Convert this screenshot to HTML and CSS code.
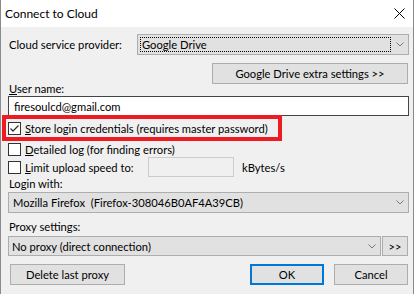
FILE: index.html
```html
<!DOCTYPE html>
<html lang="en">
<head>
    <meta charset="UTF-8">
    <title>Connect to Cloud</title>
    <link rel="stylesheet" href="styles.css">
</head>
<body>
    <div class="window">
        <div class="titlebar">
            <span class="title">Connect to Cloud</span>
            <svg class="close" width="11" height="11" viewBox="0 0 11 11">
                <path d="M0.5 0.5 L10.5 10.5 M10.5 0.5 L0.5 10.5" stroke="#000" stroke-width="1" fill="none"/>
            </svg>
        </div>

        <div class="content">
            <div class="row provider-row">
                <span class="grow">Cloud service provider:</span>
                <div class="combo provider-combo">
                    <span class="focus">Google Drive</span>
                    <span class="chevron"><svg width="8" height="5" viewBox="0 0 8 5"><path d="M0.5 0.5 L4 4 L7.5 0.5" stroke="#7a7a7a" fill="none"/></svg></span>
                </div>
            </div>

            <div class="row extra-row">
                <button class="btn extra-btn">Google Drive extra settings &gt;&gt;</button>
            </div>

            <div class="label user-label"><u>U</u>ser name:</div>
            <div class="textbox">firesoulcd@gmail.com</div>

            <div class="check-row store-row">
                <span class="checkbox">
                    <svg width="11" height="11" viewBox="0 0 11 11"><path d="M1.5 5.5 L4 8 L9.5 2.5" stroke="#333" stroke-width="1.3" fill="none"/></svg>
                </span>
                <span><u>S</u>tore login credentials (requires master password)</span>
                <div class="highlight"></div>
            </div>

            <div class="check-row detail-row">
                <span class="checkbox"></span>
                <span><u>D</u>etailed log (for finding errors)</span>
            </div>

            <div class="row limit-row">
                <div class="limit-label">
                    <span class="checkbox"></span>
                    <span><u>L</u>imit upload speed to:</span>
                </div>
                <div class="speed-input"></div>
                <span class="unit">kBytes/s</span>
            </div>

            <div class="label login-label">Login with:</div>
            <div class="combo login-combo">
                <span class="grow">Mozilla Firefox&nbsp; (Firefox-308046B0AF4A39CB)</span>
                <span class="chevron"><svg width="8" height="5" viewBox="0 0 8 5"><path d="M0.5 0.5 L4 4 L7.5 0.5" stroke="#7a7a7a" fill="none"/></svg></span>
            </div>

            <div class="label proxy-label">Proxy settings:</div>
            <div class="row proxy-row">
                <div class="combo proxy-combo">
                    <span class="grow">No proxy (direct connection)</span>
                    <span class="chevron"><svg width="8" height="5" viewBox="0 0 8 5"><path d="M0.5 0.5 L4 4 L7.5 0.5" stroke="#7a7a7a" fill="none"/></svg></span>
                </div>
                <button class="btn more-btn">&gt;&gt;</button>
            </div>

            <div class="row button-row">
                <button class="btn delete-btn">Delete last proxy</button>
                <button class="btn ok-btn">OK</button>
                <button class="btn cancel-btn">Cancel</button>
            </div>
        </div>
    </div>
</body>
</html>
```

FILE: styles.css
```css
* {
    box-sizing: border-box;
}
body {
    margin: 0;
    background: #fff;
    font-family: Lato, "Noto Sans", sans-serif;
    font-size: 11.2px;
    color: #000;
}
.window {
    width: 414px;
    height: 294px;
    background: #f0f0f0;
    border-left: 1px solid #8a8a8a;
    border-right: 1px solid #8a8a8a;
}
.titlebar {
    height: 27px;
    background: #fff;
    display: flex;
    align-items: center;
    justify-content: space-between;
    padding: 0 8px 0 4px;
}
.title {
    font-size: 12px;
}
.content {
    padding: 7px 4px 0 7px;
}
.row {
    display: flex;
    align-items: center;
}
.grow {
    flex: 1;
    white-space: nowrap;
}
.label {
    line-height: 15px;
    padding-left: 1px;
}

/* combo boxes */
.combo {
    display: flex;
    align-items: center;
    height: 21px;
    background: #e1e1e1;
    border: 1px solid #adadad;
}
.chevron {
    width: 17px;
    display: flex;
    justify-content: center;
    align-items: center;
}
.provider-row {
    height: 21px;
}
.provider-row .grow {
    padding-left: 1px;
}
.provider-combo {
    width: 272px;
    padding: 2px 0 2px 2px;
}
.focus {
    flex: 1;
    height: 100%;
    border: 1px dotted #000;
    padding-left: 1px;
    display: flex;
    align-items: center;
}

/* buttons */
.btn {
    height: 21px;
    background: #e1e1e1;
    border: 1px solid #adadad;
    font: inherit;
    color: #000;
    padding: 0;
}
.extra-row {
    margin-top: 8px;
    justify-content: flex-end;
}
.extra-btn {
    width: 196px;
    margin-right: 1px;
}

.user-label {
    margin-top: -3px;
}
.textbox {
    height: 20px;
    border: 1px solid #444;
    background: #fff;
    padding-left: 5px;
    display: flex;
    align-items: center;
}

/* check boxes */
.check-row {
    display: flex;
    align-items: center;
    height: 13px;
    position: relative;
}
.checkbox {
    width: 13px;
    height: 13px;
    border: 1px solid #333;
    background: #fff;
    margin-right: 4px;
    flex: none;
    display: flex;
    align-items: center;
    justify-content: center;
}
.store-row {
    margin-top: 6px;
}
.detail-row {
    margin-top: 8px;
}
.highlight {
    position: absolute;
    left: -6px;
    top: -7px;
    width: 280px;
    height: 26px;
    border: 4px solid #ed1c24;
}
.limit-row {
    margin-top: 1px;
    height: 20px;
}
.limit-label {
    width: 140px;
    display: flex;
    align-items: center;
}
.speed-input {
    width: 86px;
    height: 20px;
    border: 1px solid #cccccc;
    background: #f0f0f0;
}
.unit {
    margin-left: 8px;
}

.login-label {
    margin-top: -1px;
}
.login-combo {
    margin-top: 1px;
    padding-left: 4px;
}
.proxy-label {
    margin-top: 6px;
}
.proxy-row {
    margin-top: 2px;
    height: 20px;
}
.proxy-combo {
    width: 373px;
    height: 20px;
    padding-left: 3px;
}
.more-btn {
    width: 26px;
    height: 20px;
    margin-left: 1px;
}

.button-row {
    margin-top: 8px;
}
.delete-btn {
    width: 115px;
    margin-left: 2px;
}
.ok-btn {
    width: 74px;
    margin-left: auto;
    border: 2px solid #0078d7;
}
.cancel-btn {
    width: 74px;
    margin-left: 10px;
    margin-right: 1px;
}
```
